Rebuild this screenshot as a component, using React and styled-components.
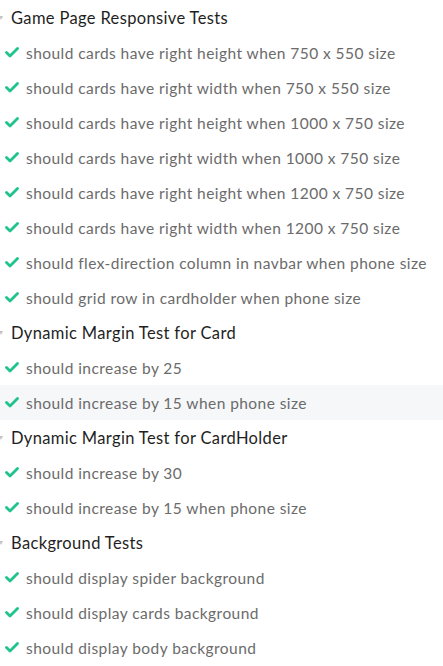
import React from "react";
import styled, { createGlobalStyle } from "styled-components";

const GlobalStyle = createGlobalStyle`
  body {
    margin: 0;
    background: #ffffff;
    font-family: Lato, "Noto Sans", sans-serif;
  }
`;

const suites = [
  {
    title: "Game Page Responsive Tests",
    tests: [
      "should cards have right height when 750 x 550 size",
      "should cards have right width when 750 x 550 size",
      "should cards have right height when 1000 x 750 size",
      "should cards have right width when 1000 x 750 size",
      "should cards have right height when 1200 x 750 size",
      "should cards have right width when 1200 x 750 size",
      "should flex-direction column in navbar when phone size",
      "should grid row in cardholder when phone size",
    ],
  },
  {
    title: "Dynamic Margin Test for Card",
    tests: ["should increase by 25", "should increase by 15 when phone size"],
    hovered: 1,
  },
  {
    title: "Dynamic Margin Test for CardHolder",
    tests: ["should increase by 30", "should increase by 15 when phone size"],
  },
  {
    title: "Background Tests",
    tests: [
      "should display spider background",
      "should display cards background",
      "should display body background",
    ],
  },
];

const Report = styled.div`
  display: flex;
  flex-direction: column;
`;

const SuiteHeader = styled.div`
  display: flex;
  align-items: center;
  height: 35px;
  font-size: 16.5px;
  letter-spacing: 0.35px;
  color: #1f1f1f;
`;

const Caret = styled.span`
  width: 0;
  height: 0;
  margin-left: -1px;
  margin-right: 8px;
  border-left: 2.5px solid transparent;
  border-right: 2.5px solid transparent;
  border-top: 4px solid #c4c4c4;
`;

const TestRow = styled.div`
  display: flex;
  align-items: center;
  gap: 7px;
  height: 35px;
  padding-left: 5px;
  font-size: 15.5px;
  letter-spacing: 0.44px;
  color: #6b6b6b;
  background: ${(p) => (p.$hovered ? "#f6f7f9" : "transparent")};
`;

const Check = () => (
  <svg width="14" height="11" viewBox="0 0 14 11">
    <path
      d="M1.5 5.6 L5 9 L12.5 1.5"
      fill="none"
      stroke="#1ec48c"
      strokeWidth="2.8"
      strokeLinecap="round"
      strokeLinejoin="round"
    />
  </svg>
);

export default function App() {
  return (
    <>
      <GlobalStyle />
      <Report>
        {suites.map((s) => (
          <React.Fragment key={s.title}>
            <SuiteHeader>
              <Caret />
              {s.title}
            </SuiteHeader>
            {s.tests.map((t, i) => (
              <TestRow key={t} $hovered={s.hovered === i}>
                <Check />
                {t}
              </TestRow>
            ))}
          </React.Fragment>
        ))}
      </Report>
    </>
  );
}
